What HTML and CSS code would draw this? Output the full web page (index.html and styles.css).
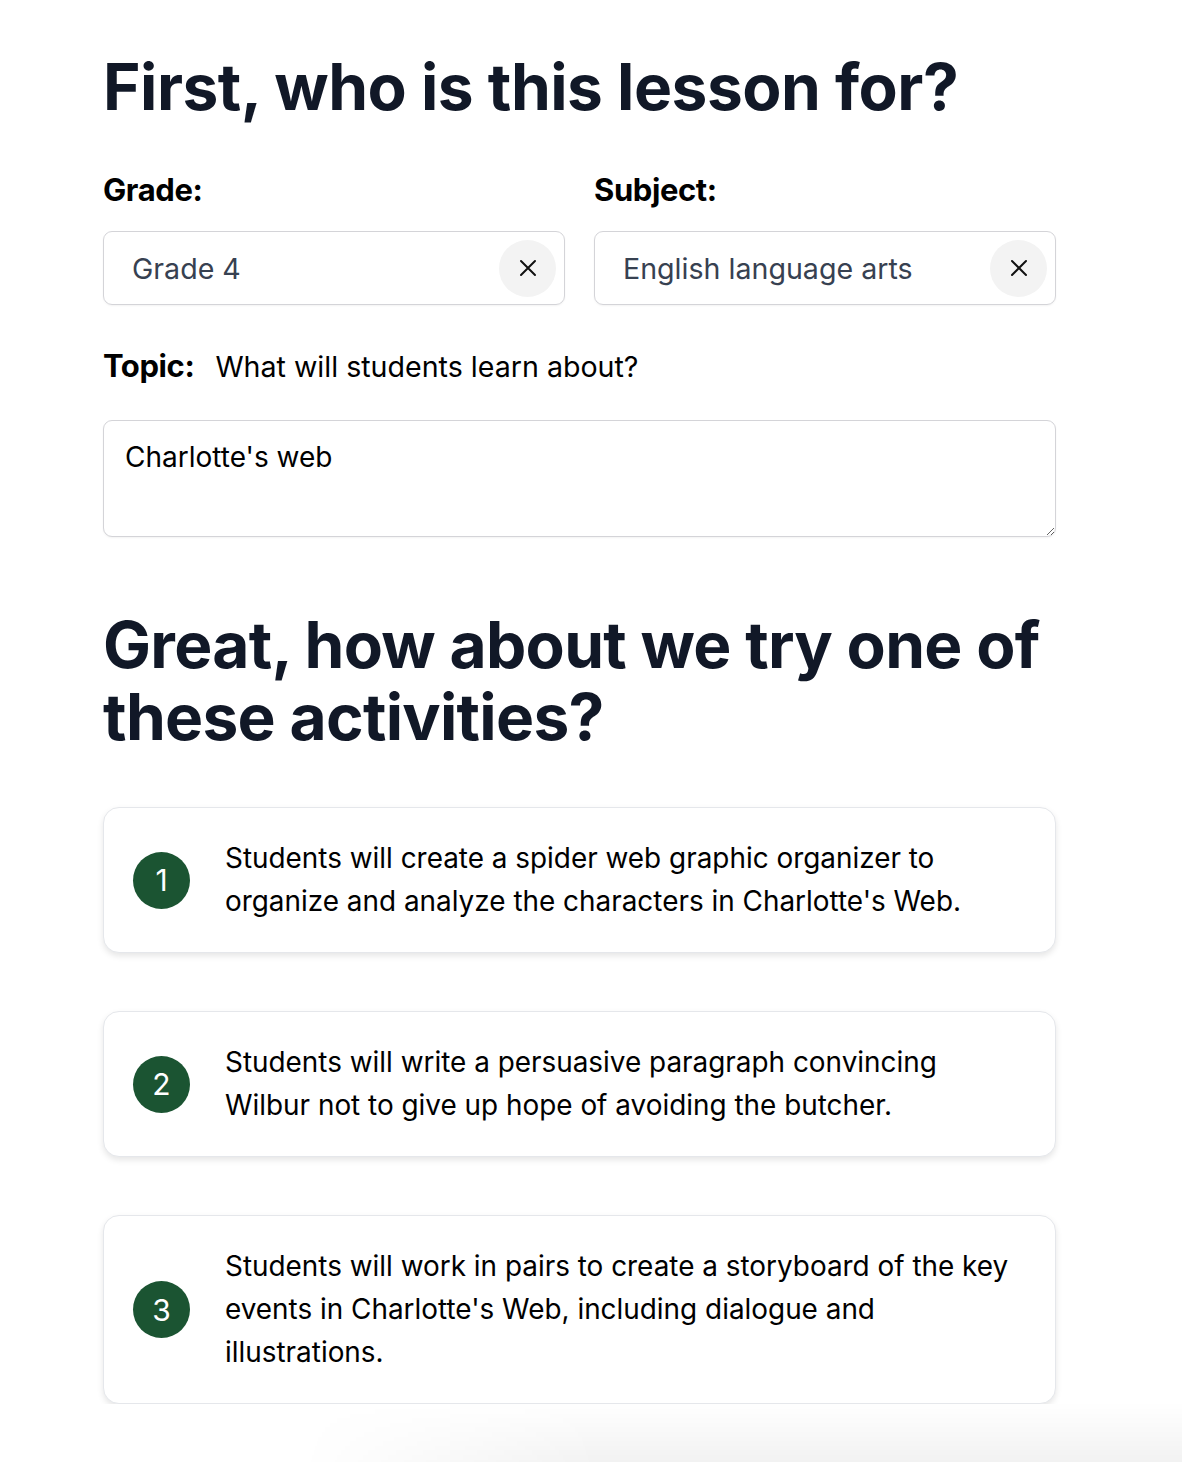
FILE: index.html
```html
<!DOCTYPE html>
<html lang="en">
<head>
<meta charset="utf-8">
<title>Lesson planner</title>
<link rel="stylesheet" href="styles.css">
</head>
<body>
<main class="page">
  <h1 class="title">First, who is this lesson for?</h1>

  <div class="selects">
    <div class="field">
      <div class="label">Grade:</div>
      <div class="select">
        <span class="select-value">Grade 4</span>
        <button class="clear" aria-label="Clear">
          <svg width="18" height="18" viewBox="0 0 18 18"><path d="M2 2L16 16M16 2L2 16" stroke="#111" stroke-width="2" stroke-linecap="round" fill="none"/></svg>
        </button>
      </div>
    </div>
    <div class="field">
      <div class="label">Subject:</div>
      <div class="select">
        <span class="select-value">English language arts</span>
        <button class="clear" aria-label="Clear">
          <svg width="18" height="18" viewBox="0 0 18 18"><path d="M2 2L16 16M16 2L2 16" stroke="#111" stroke-width="2" stroke-linecap="round" fill="none"/></svg>
        </button>
      </div>
    </div>
  </div>

  <div class="topic-row">
    <span class="label">Topic:</span>
    <span class="topic-hint">What will students learn about?</span>
  </div>
  <textarea class="topic">Charlotte's web</textarea>

  <h2 class="title title2">Great, how about we try one of these activities?</h2>

  <div class="cards">
    <div class="card">
      <div class="num">1</div>
      <p class="card-text">Students will create a spider web graphic organizer to organize and analyze the characters in Charlotte's Web.</p>
    </div>
    <div class="card">
      <div class="num">2</div>
      <p class="card-text">Students will write a persuasive paragraph convincing Wilbur not to give up hope of avoiding the butcher.</p>
    </div>
    <div class="card">
      <div class="num">3</div>
      <p class="card-text">Students will work in pairs to create a storyboard of the key events in Charlotte's Web, including dialogue and illustrations.</p>
    </div>
  </div>
</main>
<div class="bottom-fade"></div>
</body>
</html>
```

FILE: styles.css
```css
html, body {
  margin: 0;
  padding: 0;
  background: #ffffff;
}
body {
  font-family: "Inter", "Liberation Sans", sans-serif;
  color: #000;
}
.page {
  width: 953px;
  margin-left: 103px;
  padding-top: 51px;
}
.title {
  margin: 0;
  font-size: 64px;
  line-height: 72px;
  font-weight: 700;
  color: #111827;
  letter-spacing: -0.5px;
}
.selects {
  display: grid;
  grid-template-columns: 1fr 1fr;
  column-gap: 29px;
  margin-top: 47px;
}
.label {
  font-size: 31px;
  font-weight: 700;
  line-height: 40px;
  color: #000;
  letter-spacing: -0.4px;
}
.select {
  margin-top: 21px;
  height: 72px;
  border: 1px solid #d4d4d8;
  border-radius: 9px;
  display: flex;
  align-items: center;
  justify-content: space-between;
  padding: 0 8px 0 28px;
  box-shadow: 0 1px 2px rgba(0,0,0,0.05);
}
.select-value {
  font-size: 28.6px;
  color: #374151;
}
.clear {
  width: 57px;
  height: 57px;
  border-radius: 50%;
  border: none;
  background: #f3f3f3;
  display: flex;
  align-items: center;
  justify-content: center;
  padding: 0;
}
.topic-row {
  display: flex;
  align-items: baseline;
  gap: 21px;
  margin-top: 41px;
}
.topic-hint {
  font-size: 28.6px;
  color: #000;
}
.topic {
  display: block;
  box-sizing: border-box;
  width: 953px;
  height: 117px;
  margin-top: 34px;
  border: 1px solid #d4d4d8;
  border-radius: 9px;
  padding: 18px 21px;
  font-family: inherit;
  font-size: 28px;
  line-height: 36px;
  color: #000;
  box-shadow: 0 1px 2px rgba(0,0,0,0.05);
  resize: vertical;
}
.title2 {
  margin-top: 72px;
  letter-spacing: -0.7px;
}
.cards {
  display: flex;
  flex-direction: column;
  gap: 58px;
  margin-top: 54px;
}
.card {
  display: flex;
  align-items: center;
  gap: 35px;
  padding: 29px 29px;
  border: 1px solid #e5e7eb;
  border-radius: 16px;
  box-shadow: 0 3px 6px rgba(0,0,0,0.1);
  background: #fff;
}
.num {
  flex: none;
  width: 57px;
  height: 57px;
  border-radius: 50%;
  background: #1b5432;
  color: #fff;
  font-size: 30px;
  display: flex;
  align-items: center;
  justify-content: center;
}
.card-text {
  margin: 0;
  font-size: 27.9px;
  line-height: 43px;
  color: #000;
}
.bottom-fade {
  position: fixed;
  left: 0;
  right: 0;
  bottom: 0;
  height: 60px;
  pointer-events: none;
  background: linear-gradient(to bottom, rgba(0,0,0,0), rgba(0,0,0,0.05));
  -webkit-mask-image: linear-gradient(to right, transparent 300px, #000 600px);
  mask-image: linear-gradient(to right, transparent 300px, #000 600px);
}
```
